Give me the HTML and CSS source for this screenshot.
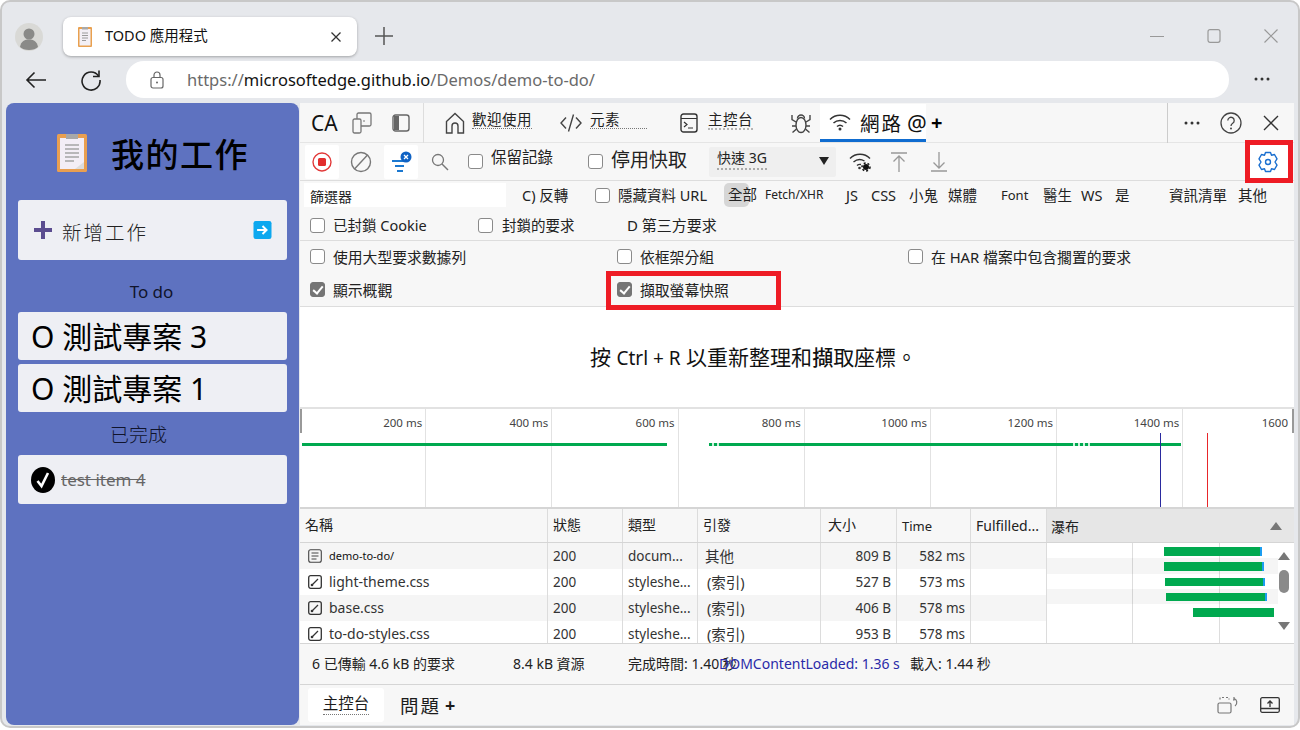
FILE: index.html
```html
<!DOCTYPE html>
<html lang="zh-Hant">
<head>
    <meta charset="UTF-8">
    <title>TODO 應用程式</title>
    <link rel="stylesheet" href="styles.css">
</head>
<body>
<div class="window">
    <!-- Tab strip -->
    <div class="tabstrip">
        <svg class="avatar" viewBox="0 0 28 28"><circle cx="14" cy="14" r="14" fill="#d9d9d6"/><circle cx="14" cy="11" r="5.5" fill="#8a8a88"/><path d="M5 24c1-6 5-7.5 9-7.5s8 1.5 9 7.5c-2 2-5 3-9 3s-7-1-9-3z" fill="#8a8a88"/></svg>
        <div class="tab">
            <svg class="favicon" viewBox="0 0 14 20"><rect width="14" height="20" rx="1" fill="#e9a04f"/><rect x="1.5" y="2" width="11" height="16.5" fill="#f3eff5"/><path d="M4 6h6M4 8.5h6M4 11h6M4 13.5h4" stroke="#9a9a9a"/><rect x="4" y="0" width="6" height="2.5" fill="#a9a9a9"/></svg>
            <span class="tab-title">TODO 應用程式</span>
            <svg class="tab-close" viewBox="0 0 12 12"><path d="M1.5 1.5l9 9M10.5 1.5l-9 9" stroke="#333" stroke-width="1.3"/></svg>
        </div>
        <svg class="new-tab" viewBox="0 0 18 18"><path d="M9 0v18M0 9h18" stroke="#555" stroke-width="1.5"/></svg>
        <div class="window-controls">
            <svg viewBox="0 0 14 14"><path d="M0 7.5h14" stroke="#999" stroke-width="1.2"/></svg>
            <svg viewBox="0 0 14 14"><rect x="1" y="0.7" width="12" height="12.6" rx="2" fill="none" stroke="#999" stroke-width="1.2"/></svg>
            <svg viewBox="0 0 14 14"><path d="M0.5 0.5l13 13M13.5 0.5l-13 13" stroke="#999" stroke-width="1.2"/></svg>
        </div>
    </div>

    <!-- Address bar -->
    <div class="addressrow">
        <svg class="nav-back" viewBox="0 0 22 18"><path d="M21 9H2M9.5 1.5L2 9l7.5 7.5" fill="none" stroke="#222" stroke-width="1.6"/></svg>
        <svg class="nav-reload" viewBox="0 0 22 22"><path d="M18.5 7A9 9 0 1 0 20 11" fill="none" stroke="#222" stroke-width="1.6"/><path d="M19 1.5V7.5H13" fill="none" stroke="#222" stroke-width="1.6"/></svg>
        <div class="omnibox">
            <svg class="lock" viewBox="0 0 14 18"><rect x="1" y="6.5" width="12" height="10.5" rx="2" fill="none" stroke="#666" stroke-width="1.2"/><path d="M4 6.5V4a3 3 0 0 1 6 0v2.5" fill="none" stroke="#666" stroke-width="1.2"/><circle cx="7" cy="11.5" r="1" fill="#666"/></svg>
            <span class="url">https://<b>microsoftedge.github.io</b>/Demos/demo-to-do/</span>
        </div>
        <svg class="menu-dots" viewBox="0 0 16 4"><circle cx="2" cy="2" r="1.5" fill="#333"/><circle cx="8" cy="2" r="1.5" fill="#333"/><circle cx="14" cy="2" r="1.5" fill="#333"/></svg>
    </div>

    <div class="content">
        <!-- TODO app -->
        <section class="app">
            <h1 class="app-title">
                <svg class="app-logo" viewBox="0 0 30 38"><rect width="30" height="38" rx="1.5" fill="#e99f50"/><rect x="3" y="4" width="24" height="31" fill="#f3eef6"/><path d="M8 11h14M8 15h14M8 19h14M8 23h14M8 27h9" stroke="#a5a5a5" stroke-width="1.3"/><rect x="9" y="0" width="12" height="5" fill="#a8a8a8"/><path d="M18 35l9-7v7z" fill="#ddd"/></svg>
                我的工作
            </h1>
            <div class="new-task">
                <svg class="new-task-plus" viewBox="0 0 18 18"><path d="M9 0v18M0 9h18" stroke="#5b4d90" stroke-width="4"/></svg>
                <span class="new-task-label">新增工作</span>
                <svg class="new-task-go" viewBox="0 0 20 20"><rect width="20" height="20" rx="2.5" fill="#0da8ef"/><path d="M4 10h10M10 5.5l4.5 4.5-4.5 4.5" fill="none" stroke="#fff" stroke-width="2.2"/></svg>
            </div>
            <h2 class="list-head">To do</h2>
            <div class="todo">O 測試專案 3</div>
            <div class="todo">O 測試專案 1</div>
            <h2 class="list-head done-head">已完成</h2>
            <div class="todo done">
                <svg class="done-check" viewBox="0 0 24 26"><ellipse cx="12" cy="13" rx="12" ry="13" fill="#000"/><path d="M6.5 14l4 5 6.5-13" fill="none" stroke="#fff" stroke-width="2.6"/></svg>
                <span>test item 4</span>
            </div>
        </section>

        <!-- DevTools -->
        <section class="devtools">
            <div class="dt-tabs">
                <span class="dt-ca">CA</span>
                <svg class="ic ic-device" viewBox="0 0 20 22"><rect x="5" y="1" width="14" height="13" rx="1.5" fill="none" stroke="#777" stroke-width="1.3"/><rect x="1" y="7" width="8" height="14" rx="1.5" fill="#f7f7f7" stroke="#777" stroke-width="1.3"/><path d="M11 9h2" stroke="#777"/></svg>
                <svg class="ic ic-dock" viewBox="0 0 18 18"><rect x="1" y="1" width="16" height="16" rx="2.5" fill="none" stroke="#666" stroke-width="1.4"/><path d="M2 2h5v14H2z" fill="#666"/></svg>
                <div class="dt-sep"></div>
                <svg class="ic ic-home" viewBox="0 0 20 22"><path d="M1.5 9.5L10 1.5l8.5 8V21H13v-7a3 3 0 0 0-6 0v7H1.5z" fill="none" stroke="#444" stroke-width="1.4"/></svg>
                <span class="dt-tab t-welcome">歡迎使用</span>
                <svg class="ic ic-code" viewBox="0 0 22 20"><path d="M6 4.5L1 10l5 5.5M16 4.5l5 5.5-5 5.5M13.5 1.5L8.5 18.5" fill="none" stroke="#444" stroke-width="1.4"/></svg>
                <span class="dt-tab t-elements">元素</span>
                <svg class="ic ic-console" viewBox="0 0 18 20"><rect x="1" y="1" width="16" height="18" rx="2.5" fill="none" stroke="#333" stroke-width="1.4"/><path d="M1 5.5h16" stroke="#333" stroke-width="1.2"/><path d="M4 9l3 2.5L4 14M8 15h5" fill="none" stroke="#333" stroke-width="1.2"/></svg>
                <span class="dt-tab t-console">主控台</span>
                <svg class="ic ic-bug" viewBox="0 0 20 22"><ellipse cx="10" cy="13" rx="5" ry="7.5" fill="none" stroke="#444" stroke-width="1.4"/><path d="M6.5 6.5a3.5 3.5 0 0 1 7 0M5 10L1 7.5V3M15 10l4-2.5V3M5 14H1M15 14h4M5.5 17L1.5 20.5M14.5 17l4 3.5" fill="none" stroke="#444" stroke-width="1.4"/></svg>
                <div class="dt-tab-active">
                    <svg class="ic ic-wifi" viewBox="0 0 22 18"><path d="M1 6.5a14 14 0 0 1 20 0M4.5 10a9.5 9.5 0 0 1 13 0M8 13.5a4.5 4.5 0 0 1 6 0" fill="none" stroke="#333" stroke-width="1.5"/><circle cx="11" cy="16" r="1.5" fill="#333"/></svg>
                    <span class="t-network">網路</span>
                    <span class="t-at">@</span>
                </div>
                <span class="t-more">+</span>
                <div class="dt-tabs-right">
                    <svg class="dots-small" viewBox="0 0 16 4"><circle cx="2" cy="2" r="1.5" fill="#333"/><circle cx="8" cy="2" r="1.5" fill="#333"/><circle cx="14" cy="2" r="1.5" fill="#333"/></svg>
                    <svg class="ic ic-help" viewBox="0 0 22 22"><circle cx="11" cy="11" r="10" fill="none" stroke="#444" stroke-width="1.3"/><path d="M7.8 8.5a3.2 3.2 0 1 1 4.9 2.7c-1.2.8-1.7 1.4-1.7 2.8" fill="none" stroke="#444" stroke-width="1.3"/><circle cx="11" cy="16.5" r="1" fill="#444"/></svg>
                    <svg class="ic ic-x" viewBox="0 0 16 16"><path d="M1 1l14 14M15 1L1 15" stroke="#333" stroke-width="1.4"/></svg>
                </div>
            </div>

            <div class="dt-toolbar">
                <div class="tool-box box-record"><svg viewBox="0 0 20 20" width="20" height="20"><circle cx="10" cy="10" r="9" fill="none" stroke="#e23a3a" stroke-width="1.4"/><rect x="6" y="6" width="8" height="8" rx="1.5" fill="#e22d2d"/></svg></div>
                <svg class="ic ic-clear" viewBox="0 0 22 22"><circle cx="11" cy="11" r="9.5" fill="none" stroke="#777" stroke-width="1.4"/><path d="M4.5 18L17.5 4" stroke="#777" stroke-width="1.4"/></svg>
                <div class="tool-box box-filter"><svg viewBox="0 0 24 24" width="24" height="24"><path d="M3 11h13M6 16h9M8 21h6" stroke="#1b78d0" stroke-width="1.8"/><circle cx="17" cy="7" r="5.5" fill="#0f62c4"/><path d="M15 5l4 4M19 5l-4 4" stroke="#fff" stroke-width="1.3"/></svg></div>
                <svg class="ic ic-search" viewBox="0 0 18 18"><circle cx="7" cy="7" r="5.5" fill="none" stroke="#777" stroke-width="1.3"/><path d="M11 11l6 6" stroke="#777" stroke-width="1.4"/></svg>
                <span class="cb cb-preserve"></span>
                <span class="lbl-preserve">保留記錄</span>
                <span class="cb cb-cache"></span>
                <span class="lbl-cache">停用快取</span>
                <div class="throttle"><span class="throttle-text">快速 3G</span><span class="caret"></span></div>
                <svg class="ic ic-wifigear" viewBox="0 0 22 20"><path d="M1 6.5a14 14 0 0 1 20 0M4.5 10a9.5 9.5 0 0 1 11-1M8 13.5a4.5 4.5 0 0 1 4-1" fill="none" stroke="#333" stroke-width="1.4"/><circle cx="10.5" cy="16" r="1.3" fill="#333"/><circle cx="17" cy="15" r="3" fill="#111"/><circle cx="17" cy="15" r="4" fill="none" stroke="#111" stroke-width="1.5" stroke-dasharray="2 2"/></svg>
                <svg class="ic ic-up" viewBox="0 0 16 20"><path d="M0 1h16M8 20V4M2.5 9.5L8 4l5.5 5.5" fill="none" stroke="#999" stroke-width="1.3"/></svg>
                <svg class="ic ic-down" viewBox="0 0 16 20"><path d="M0 19h16M8 0v16M2.5 10.5L8 16l5.5-5.5" fill="none" stroke="#999" stroke-width="1.3"/></svg>
                <div class="tool-box box-gear"><svg viewBox="0 0 20 22" width="20" height="22"><path d="M7.5 1.5H12.5L13.5 4.2L16.5 3.5L19 7.8L17 11L19 14.2L16.5 18.5L13.5 17.8L12.5 20.5H7.5L6.5 17.8L3.5 18.5L1 14.2L3 11L1 7.8L3.5 3.5L6.5 4.2Z" fill="none" stroke="#1a6fd0" stroke-width="1.4" stroke-linejoin="round"/><circle cx="10" cy="11" r="2.5" fill="none" stroke="#1a6fd0" stroke-width="1.4"/></svg></div>
            </div>

            <div class="dt-filters">
                <div class="filter-row">
                    <div class="filter-input">篩選器</div>
                    <span class="f-invert">C) 反轉</span>
                    <span class="cb f-hide-cb"></span>
                    <span class="f-hide">隱藏資料 URL</span>
                    <span class="pill">全部</span>
                    <span class="f-fetch">Fetch/XHR</span>
                    <span class="f-js">JS</span>
                    <span class="f-css">CSS</span>
                    <span class="f-img">小鬼</span>
                    <span class="f-media">媒體</span>
                    <span class="f-font">Font</span>
                    <span class="f-doc">醫生</span>
                    <span class="f-ws">WS</span>
                    <span class="f-wasm">是</span>
                    <span class="f-manifest">資訊清單</span>
                    <span class="f-other">其他</span>
                </div>
                <div class="filter-row row-two">
                    <span class="cb"></span>
                    <span class="f-cookie">已封鎖 Cookie</span>
                    <span class="cb f-blocked-cb"></span>
                    <span class="f-blocked">封鎖的要求</span>
                    <span class="f-third">D 第三方要求</span>
                </div>
            </div>

            <div class="dt-settings">
                <label class="set-cell"><span class="cb"></span>使用大型要求數據列</label>
                <label class="set-cell"><span class="cb"></span>依框架分組</label>
                <label class="set-cell"><span class="cb"></span>在 HAR 檔案中包含擱置的要求</label>
                <label class="set-cell"><span class="cb checked"></span>顯示概觀</label>
                <label class="set-cell"><span class="cb checked"></span>擷取螢幕快照</label>
            </div>

            <div class="dt-message">按 <span class="msg-latin">Ctrl + R</span> 以重新整理和<b>擷</b>取座標。</div>

            <div class="overview">
                <div class="ov-cell"><span>200 ms</span></div>
                <div class="ov-cell"><span>400 ms</span></div>
                <div class="ov-cell"><span>600 ms</span></div>
                <div class="ov-cell"><span>800 ms</span></div>
                <div class="ov-cell"><span>1000 ms</span></div>
                <div class="ov-cell"><span>1200 ms</span></div>
                <div class="ov-cell"><span>1400 ms</span></div>
                <div class="ov-cell ov-last"><span>1600</span></div>
                <div class="ov-handle handle-left"></div>
                <div class="ov-handle handle-right"></div>
                <div class="ov-bar" style="left:2px;width:365px"></div>
                <div class="ov-bar ov-dim" style="left:409px;width:13px"></div>
                <div class="ov-bar" style="left:422px;width:348px"></div>
                <div class="ov-bar ov-dim" style="left:770px;width:20px"></div>
                <div class="ov-bar" style="left:790px;width:91px"></div>
                <div class="ov-mark mark-blue"></div>
                <div class="ov-mark mark-red"></div>
            </div>

            <div class="net-table">
                <div class="net-left">
                    <div class="net-row net-head">
                        <div>名稱</div><div>狀態</div><div>類型</div><div>引發</div><div class="head-size">大小</div><div class="head-time">Time</div><div class="head-ful">Fulfilled...</div>
                    </div>
                    <div class="net-row alt">
                        <div class="name-cell"><svg class="file" viewBox="0 0 14 14"><rect x="0.7" y="0.7" width="12.6" height="12.6" rx="2" fill="none" stroke="#444" stroke-width="1.1"/><path d="M3.5 4h7M3.5 7h7M3.5 10h5" stroke="#444"/></svg><span class="name-small">demo-to-do/</span></div>
                        <div>200</div><div>docum...</div><div class="cell-other">其他</div><div class="num">809 B</div><div class="num">582 ms</div><div></div>
                    </div>
                    <div class="net-row">
                        <div class="name-cell"><svg class="file" viewBox="0 0 14 14"><rect x="0.7" y="0.7" width="12.6" height="12.6" rx="2" fill="none" stroke="#333" stroke-width="1.3"/><path d="M3.5 10.5l6.5-6.5" stroke="#333" stroke-width="1.3"/><circle cx="4" cy="10" r="1.3" fill="#333"/></svg>light-theme.css</div>
                        <div>200</div><div>styleshe...</div><div class="cell-index">(索引)</div><div class="num">527 B</div><div class="num">573 ms</div><div></div>
                    </div>
                    <div class="net-row alt">
                        <div class="name-cell"><svg class="file" viewBox="0 0 14 14"><rect x="0.7" y="0.7" width="12.6" height="12.6" rx="2" fill="none" stroke="#333" stroke-width="1.3"/><path d="M3.5 10.5l6.5-6.5" stroke="#333" stroke-width="1.3"/><circle cx="4" cy="10" r="1.3" fill="#333"/></svg>base.css</div>
                        <div>200</div><div>styleshe...</div><div class="cell-index">(索引)</div><div class="num">406 B</div><div class="num">578 ms</div><div></div>
                    </div>
                    <div class="net-row">
                        <div class="name-cell"><svg class="file" viewBox="0 0 14 14"><rect x="0.7" y="0.7" width="12.6" height="12.6" rx="2" fill="none" stroke="#333" stroke-width="1.3"/><path d="M3.5 10.5l6.5-6.5" stroke="#333" stroke-width="1.3"/><circle cx="4" cy="10" r="1.3" fill="#333"/></svg>to-do-styles.css</div>
                        <div>200</div><div>styleshe...</div><div class="cell-index">(索引)</div><div class="num">953 B</div><div class="num">578 ms</div><div></div>
                    </div>
                </div>
                <div class="waterfall">
                    <div class="wf-head"><span>瀑布</span><span class="tri-up"></span></div>
                    <div class="wf-body">
                        <div class="wf-lines">
                            <div class="wf-row"><i class="wf-bar b1"></i></div>
                            <div class="wf-row alt"><i class="wf-bar b2"></i></div>
                            <div class="wf-row"><i class="wf-bar b3"></i></div>
                            <div class="wf-row alt"><i class="wf-bar b4"></i></div>
                            <div class="wf-row"><i class="wf-bar b5"></i></div>
                        </div>
                        <div class="wf-scroll">
                            <span class="tri-up"></span>
                            <span class="thumb"></span>
                            <span class="tri-down"></span>
                        </div>
                    </div>
                </div>
            </div>

            <div class="statusbar">
                <span class="st-req">6 已傳輸 4.6 kB 的要求</span>
                <span class="st-res">8.4 kB 資源</span>
                <span class="st-fin">完成時間: 1.40 秒</span>
                <span class="st-dom">DOMContentLoaded: 1.36 s</span>
                <span class="st-load">載入: 1.44 秒</span>
            </div>

            <div class="drawer">
                <span class="drawer-tab"><span class="drawer-label">主控台</span></span>
                <span class="drawer-issue">問題</span>
                <span class="drawer-more">+</span>
                <svg class="ic ic-rotate" viewBox="0 0 22 18"><rect x="1" y="7" width="13" height="10" rx="1.5" fill="none" stroke="#777" stroke-width="1.2"/><path d="M3 3.5V1.5h9v2" fill="none" stroke="#777" stroke-width="1.2" stroke-dasharray="2 2"/><path d="M17 2.5c3 1 4 5 1 7.5M17 1v3h-1" fill="none" stroke="#777" stroke-width="1.2"/></svg>
                <svg class="ic ic-undock" viewBox="0 0 20 16"><rect x="0.7" y="0.7" width="18.6" height="14.6" rx="1.5" fill="none" stroke="#333" stroke-width="1.3"/><path d="M1 11.5h18M10 10V4M7.5 6.5L10 4l2.500 2.500" fill="none" stroke="#333" stroke-width="1.3"/></svg>
            </div>

            <!-- Annotation boxes -->
            <div class="callout callout-gear"></div>
            <div class="callout callout-shot"></div>
        </section>
    </div>
</div>
</body>
</html>
```

FILE: styles.css
```css
:root {
    --frame: #e6e8ec;
    --panel: #f7f7f7;
    --line: #d9d9d9;
    --text: #1c1c1c;
    --app-blue: #5e72c0;
    --callout: #ee1c25;
    --green: #00a94f;
}

* {
    box-sizing: border-box;
    margin: 0;
    padding: 0;
}

body {
    width: 1300px;
    height: 730px;
    overflow: hidden;
    background: #fff;
    color: var(--text);
    font-family: "Noto Sans", "Noto Sans CJK TC", sans-serif;
}

.window {
    width: 1300px;
    height: 728px;
    background: var(--frame);
    border: 2px solid #c8c8c8;
    border-radius: 10px;
    position: relative;
    overflow: hidden;
}

/* Tab strip */
.tabstrip {
    height: 57px;
    display: flex;
    align-items: flex-start;
    padding: 15px 0 0 13px;
}

.avatar {
    width: 28px;
    height: 28px;
    margin-top: 6px;
}

.tab {
    width: 294px;
    height: 39px;
    margin-left: 20px;
    background: #fff;
    border-radius: 8px;
    box-shadow: 0 1px 3px rgba(0, 0, 0, 0.3);
    display: flex;
    align-items: center;
    padding: 0 15px;
}

.favicon {
    width: 14px;
    height: 20px;
}

.tab-title {
    margin-left: 13px;
    margin-bottom: 4px;
    font-size: 14.5px;
    color: #111;
}

.tab-close {
    width: 12px;
    height: 12px;
    margin-left: auto;
}

.new-tab {
    width: 18px;
    height: 18px;
    margin: 10px 0 0 18px;
}

.window-controls {
    margin-left: auto;
    margin-top: 12px;
    display: flex;
    gap: 43px;
    padding-right: 20px;
}

.window-controls svg {
    width: 14px;
    height: 14px;
}

/* Address bar */
.addressrow {
    height: 44px;
    display: flex;
    align-items: flex-start;
    padding-top: 2px;
}

.nav-back {
    width: 22px;
    height: 18px;
    margin: 10px 0 0 23px;
}

.nav-reload {
    width: 22px;
    height: 22px;
    margin: 8px 0 0 33px;
}

.omnibox {
    width: 1103px;
    height: 37px;
    margin-left: 24px;
    background: #fff;
    border-radius: 18px;
    display: flex;
    align-items: center;
    padding-left: 24px;
}

.lock {
    width: 14px;
    height: 18px;
}

.url {
    margin-left: 23px;
    font-size: 16.5px;
    color: #6a6a6a;
    white-space: nowrap;
}

.url b {
    font-weight: 400;
    color: #111;
}

.menu-dots {
    width: 16px;
    height: 4px;
    margin: 16px 0 0 25px;
}

/* Content */
.content {
    display: flex;
    height: 622px;
    margin-left: 4px;
    gap: 1px;
}

.app {
    width: 293px;
    height: 622px;
    background: var(--app-blue);
    border-radius: 8px;
    padding: 0 12px;
}

.app-title {
    height: 99px;
    display: flex;
    align-items: center;
    padding-left: 39px;
    gap: 24px;
    font-size: 33px;
    font-weight: 500;
    letter-spacing: 1.5px;
    color: #000;
    margin-bottom: -2px;
}

.app-logo {
    width: 30px;
    height: 38px;
}

.new-task {
    height: 60px;
    background: #eeeff4;
    border-radius: 3px;
    display: flex;
    align-items: center;
    padding: 0 15px 0 16px;
}

.new-task-plus {
    width: 18px;
    height: 18px;
}

.new-task-label {
    margin-left: 10px;
    padding-top: 2px;
    font-size: 19.5px;
    letter-spacing: 2px;
    font-weight: 300;
    color: #222;
}

.new-task-go {
    width: 19px;
    height: 18px;
    margin-left: auto;
}

.list-head {
    height: 52px;
    line-height: 24px;
    padding-top: 20px;
    font-size: 17px;
    font-weight: 400;
    color: #10142c;
    text-align: center;
    margin-right: 2px;
}

.todo {
    height: 48px;
    margin-bottom: 4px;
    background: #eeeff4;
    border-radius: 3px;
    padding-left: 13px;
    font-size: 30px;
    line-height: 50px;
    color: #000;
    white-space: nowrap;
    overflow: hidden;
}

.done-head {
    height: 39px;
    padding-top: 6px;
    font-size: 19px;
    font-weight: 300;
    text-align: left;
    padding-left: 92px;
    line-height: 26px;
}

.done {
    height: 49px;
    display: flex;
    align-items: center;
    gap: 6px;
    font-size: 17px;
    line-height: 24px;
    color: #666;
    text-decoration: line-through;
}

.done-check {
    width: 24px;
    height: 26px;
}

/* DevTools */
.devtools {
    width: 994px;
    height: 622px;
    background: var(--panel);
    display: flex;
    flex-direction: column;
    position: relative;
}

.ic {
    flex: none;
    display: block;
}

.dt-tabs {
    height: 40px;
    display: flex;
    align-items: center;
    border-bottom: 1px solid #e5e5e5;
    font-size: 14px;
    white-space: nowrap;
}

.dt-ca {
    margin-left: 11px;
    width: 41px;
    font-size: 21px;
    color: #111;
}

.ic-device { width: 20px; height: 22px; }
.ic-dock { width: 18px; height: 18px; margin-left: 20px; }

.dt-sep {
    width: 1px;
    height: 40px;
    background: #ddd;
    margin-left: 13px;
}

.ic-home { width: 20px; height: 22px; margin-left: 21px; }
.ic-code { width: 22px; height: 20px; margin-left: 28px; }
.ic-console { width: 18px; height: 20px; margin-left: 33px; }
.ic-bug { width: 20px; height: 22px; margin-left: 38px; }

.dt-tab {
    font-size: 14.5px;
    letter-spacing: 0.5px;
    margin-bottom: 6px;
    color: #222;
    line-height: 18px;
}

.t-welcome {
    margin-left: 7px;
    width: 60px;
    border-bottom: 1px dotted #777;
}

.t-elements {
    margin-left: 8px;
    width: 57px;
    border-bottom: 1px dotted #777;
}

.t-console {
    margin-left: 10px;
    margin-bottom: 5px;
    width: 45px;
    border-bottom: 2px dotted #b5b5b5;
}

.dt-tab-active {
    width: 106px;
    height: 38px;
    margin-left: 9px;
    margin-top: 1px;
    background: #fff;
    border-bottom: 3px solid #0f6cd0;
    display: flex;
    align-items: center;
    padding-left: 9px;
}

.ic-wifi { width: 22px; height: 18px; }

.t-network {
    margin-left: 9px;
    padding-top: 2px;
    font-size: 19.5px;
    letter-spacing: 2px;
    color: #111;
}

.t-at {
    margin-left: 4px;
    font-size: 22px;
    color: #111;
}

.t-more {
    margin-left: 5px;
    font-size: 20px;
    font-weight: 700;
    color: #000;
}

.dt-tabs-right {
    margin-left: auto;
    width: 127px;
    height: 40px;
    border-left: 1px solid #ccc;
    display: flex;
    align-items: center;
    padding-left: 16px;
}

.dots-small {
    width: 16px;
    height: 4px;
}

.ic-help { width: 22px; height: 22px; margin-left: 20px; }
.ic-x { width: 16px; height: 16px; margin-left: 21px; }

.dt-toolbar {
    height: 38px;
    display: flex;
    align-items: center;
    border-bottom: 1px solid #ddd;
    white-space: nowrap;
}

.tool-box {
    background: #fff;
    height: 34px;
    width: 34px;
    display: flex;
    align-items: center;
    justify-content: center;
    border-radius: 2px;
}

.box-record { margin-left: 5px; }
.box-filter { margin-left: 12px; }
.box-gear { margin-left: 301px; width: 40px; }

.ic-clear { width: 22px; height: 22px; margin-left: 11px; }
.ic-search { width: 18px; height: 18px; margin-left: 13px; }

.cb {
    flex: none;
    display: inline-block;
    width: 15px;
    height: 15px;
    background: #fff;
    border: 1.5px solid #8a8a8a;
    border-radius: 3px;
    position: relative;
}

.cb.checked {
    background: #757575;
    border-color: #757575;
}

.cb.checked::after {
    content: '';
    position: absolute;
    left: 3.5px;
    top: 0.5px;
    width: 4px;
    height: 8px;
    border: solid #fff;
    border-width: 0 2px 2px 0;
    transform: rotate(40deg);
}

.cb-preserve { margin-left: 19px; }

.lbl-preserve {
    width: 97px;
    margin-left: 8px;
    margin-bottom: 10px;
    font-size: 15.5px;
    line-height: 22px;
    color: #222;
}

.lbl-cache {
    margin-left: 8px;
    margin-bottom: 4px;
    width: 98px;
    font-size: 19px;
    line-height: 24px;
    color: #222;
}

.throttle {
    width: 127px;
    height: 30px;
    background: #efefef;
    border-radius: 2px;
    display: flex;
    align-items: center;
    padding: 0 7px 5px 8px;
    font-size: 14px;
    line-height: 20px;
    color: #222;
}

.throttle-text {
    width: 50px;
    border-bottom: 2px dotted #aaa;
}

.caret {
    width: 0;
    height: 0;
    margin-top: 4px;
    margin-left: auto;
    border-left: 5.5px solid transparent;
    border-right: 5.5px solid transparent;
    border-top: 8px solid #222;
}

.ic-wifigear { width: 22px; height: 20px; margin-left: 13px; }
.ic-up { width: 16px; height: 20px; margin-left: 20px; }
.ic-down { width: 16px; height: 20px; margin-left: 24px; }

.dt-filters {
    height: 60px;
    border-bottom: 1px solid #ddd;
    font-size: 14.5px;
    color: #222;
    white-space: nowrap;
}

.filter-row {
    height: 30px;
    display: flex;
    align-items: center;
    line-height: 26px;
    padding-bottom: 2px;
}

.row-two {
    padding-left: 10px;
}

.filter-input {
    width: 202px;
    height: 24px;
    margin-left: 4px;
    padding-left: 6px;
    background: #fff;
    font-size: 14px;
    line-height: 28px;
}

.filter-row span {
    flex: none;
}

.f-invert { margin-left: 16px; width: 73px; }
.f-hide { margin-left: 8px; width: 106px; }

.pill {
    width: 25px;
    height: 24px;
    line-height: 22px;
    background: #d6d6d6;
    border-radius: 5px;
    padding-left: 4px;
}

.f-fetch { margin-left: 16px; width: 81px; font-size: 12px; }
.f-js { width: 25px; }
.f-css { width: 38px; }
.f-img { width: 39px; }
.f-media { width: 53px; }
.f-font { width: 42px; font-size: 13px; }
.f-doc { width: 38px; }
.f-ws { width: 34px; }
.f-wasm { width: 54px; }
.f-manifest { width: 69px; }
.f-other { width: 30px; }

.f-cookie { margin-left: 8px; width: 145px; }
.f-blocked { margin-left: 9px; width: 125px; }
.f-third { font-size: 15px; }

.dt-settings {
    height: 66px;
    border-bottom: 1px solid #ddd;
    display: grid;
    grid-template-columns: 307px 291px 1fr;
    grid-template-rows: 33px 33px;
    padding-left: 10px;
    font-size: 14.8px;
    color: #222;
}

.set-cell {
    display: flex;
    align-items: center;
    gap: 8px;
    padding-bottom: 2px;
    line-height: 22px;
}

.dt-message {
    height: 100px;
    background: #fff;
    padding-left: 290px;
    padding-top: 36px;
    font-size: 21px;
    line-height: 28px;
    color: #111;
    white-space: nowrap;
}

.dt-message b {
    font-weight: 500;
}

.msg-latin {
    font-size: 19px;
}

.overview {
    height: 102px;
    background: #fff;
    border-top: 2px solid #e2e2e2;
    border-bottom: 2px solid #d5d5d5;
    display: grid;
    grid-template-columns: repeat(7, 126.2px) 1fr;
    position: relative;
}

.ov-cell {
    border-right: 1px solid #e2e2e2;
    text-align: right;
    padding-right: 3px;
    font-size: 11.5px;
    line-height: 28px;
    color: #444;
}

.ov-last {
    border-right: 0;
    padding-right: 6px;
}

.ov-handle {
    position: absolute;
    top: 0;
    width: 2px;
    height: 24px;
    background: #999;
}

.handle-left { left: 0; }
.handle-right { right: 0; }

.ov-bar {
    position: absolute;
    top: 34px;
    height: 3px;
    background: var(--green);
}

.ov-dim {
    background: repeating-linear-gradient(90deg, var(--green) 0 3px, #cfeedd 3px 5px);
}

.ov-mark {
    position: absolute;
    top: 24px;
    bottom: 0;
    width: 1px;
}

.mark-blue { left: 860px; background: #2a2a9f; }
.mark-red { left: 907px; background: #e8262a; }

.net-table {
    height: 135px;
    display: flex;
    overflow: hidden;
    border-bottom: 1px solid #d5d5d5;
}

.net-left {
    width: 747px;
}

.net-row {
    height: 26px;
    display: grid;
    grid-template-columns: 248px 75px 75px 123px 76px 74px 76px;
    background: #fff;
    font-size: 13.5px;
    line-height: 26px;
    color: #333;
}

.net-row > div {
    border-right: 1px solid #dcdcdc;
    padding-left: 5px;
    white-space: nowrap;
    overflow: hidden;
}

.net-row.alt {
    background: #f5f5f5;
}

.net-head {
    height: 34px;
    background: var(--panel);
    border-bottom: 1px solid #d5d5d5;
    line-height: 32px;
    font-size: 14px;
    color: #222;
}

.net-row .head-size { padding-left: 7px; }
.head-time { line-height: 35px; font-size: 13px; }
.head-ful { line-height: 33px; font-size: 14px; }

.net-row .name-cell {
    display: flex;
    align-items: center;
    gap: 7px;
    padding-left: 8px;
    font-size: 14px;
}

.file {
    width: 14px;
    height: 14px;
    flex: none;
}

.name-small {
    font-size: 11px;
    color: #111;
}

.net-row .cell-other { padding-left: 7px; font-size: 14.5px; }
.net-row .cell-index { padding-left: 9px; font-size: 14.5px; }

.net-row .num {
    text-align: right;
    padding-right: 5px;
    padding-left: 0;
}

.waterfall {
    flex: 1;
}

.wf-head {
    height: 34px;
    background: #e6e6e6;
    border-bottom: 1px solid #d5d5d5;
    display: flex;
    align-items: center;
    justify-content: space-between;
    padding: 0 12px 0 4px;
    font-size: 14px;
    color: #222;
}

.tri-up {
    width: 0;
    height: 0;
    border-left: 6px solid transparent;
    border-right: 6px solid transparent;
    border-bottom: 8px solid #777;
}

.tri-down {
    width: 0;
    height: 0;
    border-left: 6px solid transparent;
    border-right: 6px solid transparent;
    border-top: 8px solid #777;
}

.wf-body {
    display: flex;
    height: 100px;
    background: #fff;
}

.wf-lines {
    width: 231px;
    background-image: linear-gradient(#ddd, #ddd), linear-gradient(#ddd, #ddd);
    background-size: 1px 100%;
    background-position: 85px 0, 172px 0;
    background-repeat: no-repeat;
}

.wf-row {
    height: 15.3px;
    padding-top: 4px;
}

.wf-row.alt {
    background-color: rgba(0, 0, 0, 0.04);
}

.wf-bar {
    display: block;
    height: 8.5px;
    background: var(--green);
    border-right: 2px solid #1b9df0;
}

.b1 { margin-left: 117px; width: 98px; }
.b2 { margin-left: 117px; width: 100px; }
.b3 { margin-left: 118px; width: 100px; }
.b4 { margin-left: 119px; width: 101px; }
.b5 { margin-left: 146px; width: 81px; border-right: 0; }

.wf-scroll {
    flex: 1;
    display: flex;
    flex-direction: column;
    align-items: center;
    padding: 9px 4px 0 0;
}

.thumb {
    width: 10px;
    height: 23px;
    margin-top: 10px;
    background: #8a8a8a;
    border-radius: 5px;
}

.wf-scroll .tri-down {
    margin-top: 29px;
}

.statusbar {
    height: 41px;
    display: flex;
    align-items: center;
    border-bottom: 1px solid #d5d5d5;
    padding-left: 12px;
    font-size: 14px;
    line-height: 20px;
    padding-bottom: 1px;
    color: #222;
    white-space: nowrap;
}

.st-req { width: 201px; }
.st-res { width: 115px; }
.st-fin { width: 91px; }
.st-dom { width: 191px; color: #2a2aa8; }

.drawer {
    height: 40px;
    display: flex;
    align-items: center;
    padding-left: 8px;
}

.drawer-tab {
    width: 76px;
    height: 34px;
    background: #fff;
    border-radius: 3px;
    text-align: center;
    font-size: 15.5px;
    line-height: 30px;
}

.drawer-label {
    border-bottom: 1px dotted #777;
}

.drawer-issue {
    margin-left: 16px;
    font-size: 18.5px;
    letter-spacing: 2px;
}

.drawer-more {
    margin-left: 4px;
    font-size: 18px;
    font-weight: 700;
}

.ic-rotate { width: 22px; height: 18px; margin-left: auto; }
.ic-undock { width: 20px; height: 16px; margin: 0 14px 0 21px; }

.callout {
    position: absolute;
    border: 5px solid var(--callout);
    pointer-events: none;
}

.callout-gear {
    left: 945px;
    top: 37px;
    width: 48px;
    height: 43px;
}

.callout-shot {
    left: 306px;
    top: 168px;
    width: 175px;
    height: 39px;
}
```
